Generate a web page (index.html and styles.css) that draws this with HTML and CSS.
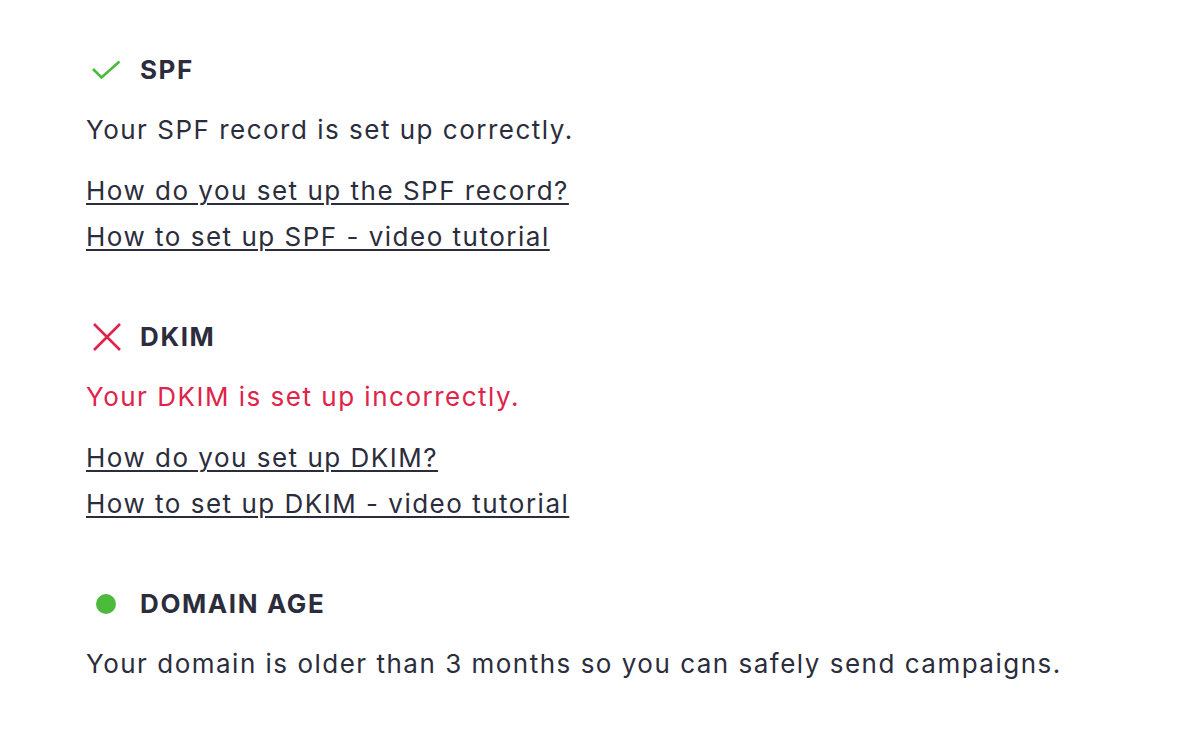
FILE: index.html
```html
<!DOCTYPE html>
<html lang="en">
<head>
<meta charset="utf-8">
<title>Domain checks</title>
<link rel="stylesheet" href="styles.css">
</head>
<body>
<main class="checks">
  <section class="check">
    <div class="check-head">
      <span class="check-icon">
        <svg width="30" height="22" viewBox="0 0 30 22"><path d="M2 10 L10.5 18.5 L28.5 2.5" fill="none" stroke="#4cba3a" stroke-width="2.6"/></svg>
      </span>
      <h2 class="check-title">SPF</h2>
    </div>
    <p class="check-text">Your SPF record is set up correctly.</p>
    <div class="check-links">
      <a href="#" class="check-link">How do you set up the SPF record?</a>
      <a href="#" class="check-link">How to set up SPF - video tutorial</a>
    </div>
  </section>
  <section class="check">
    <div class="check-head">
      <span class="check-icon">
        <svg width="30" height="30" viewBox="0 0 30 30"><path d="M3 2 L29 28 M29 2 L3 28" fill="none" stroke="#e0234a" stroke-width="2.6"/></svg>
      </span>
      <h2 class="check-title">DKIM</h2>
    </div>
    <p class="check-text error">Your DKIM is set up incorrectly.</p>
    <div class="check-links">
      <a href="#" class="check-link">How do you set up DKIM?</a>
      <a href="#" class="check-link">How to set up DKIM - video tutorial</a>
    </div>
  </section>
  <section class="check">
    <div class="check-head">
      <span class="check-icon"><span class="dot"></span></span>
      <h2 class="check-title">DOMAIN AGE</h2>
    </div>
    <p class="check-text">Your domain is older than 3 months so you can safely send campaigns.</p>
  </section>
</main>
</body>
</html>
```
FILE: styles.css
```css
html, body { margin: 0; padding: 0; background: #fff; }
body {
  font-family: Inter, "Noto Sans", sans-serif;
  color: #2b2d3c;
  font-size: 26px;
}
.checks {
  padding: 47px 0 0 86px;
  display: flex;
  flex-direction: column;
  gap: 54px;
}
.check { display: flex; flex-direction: column; }
.check-head {
  display: flex;
  align-items: center;
  height: 46px;
}
.check-icon {
  width: 54px;
  display: flex;
  align-items: center;
  justify-content: flex-start;
  padding-left: 5px;
  box-sizing: border-box;
}
.dot {
  display: block;
  width: 20px;
  height: 20px;
  border-radius: 50%;
  background: #4cba3a;
  margin-left: 5px;
}
.check-title {
  margin: 0;
  font-size: 26px;
  font-weight: 700;
  letter-spacing: 1.6px;
  line-height: 46px;
}
.check-text {
  margin: 14px 0 0;
  line-height: 46px;
  letter-spacing: 1.5px;
}
.check-text.error { color: #e0234a; }
.check-links {
  display: flex;
  flex-direction: column;
  align-items: flex-start;
  margin-top: 15px;
}
.check-link {
  color: #2b2d3c;
  line-height: 46px;
  letter-spacing: 1.5px;
  text-decoration: underline;
  text-underline-offset: 3px;
  text-decoration-thickness: 1.5px;
}
```
